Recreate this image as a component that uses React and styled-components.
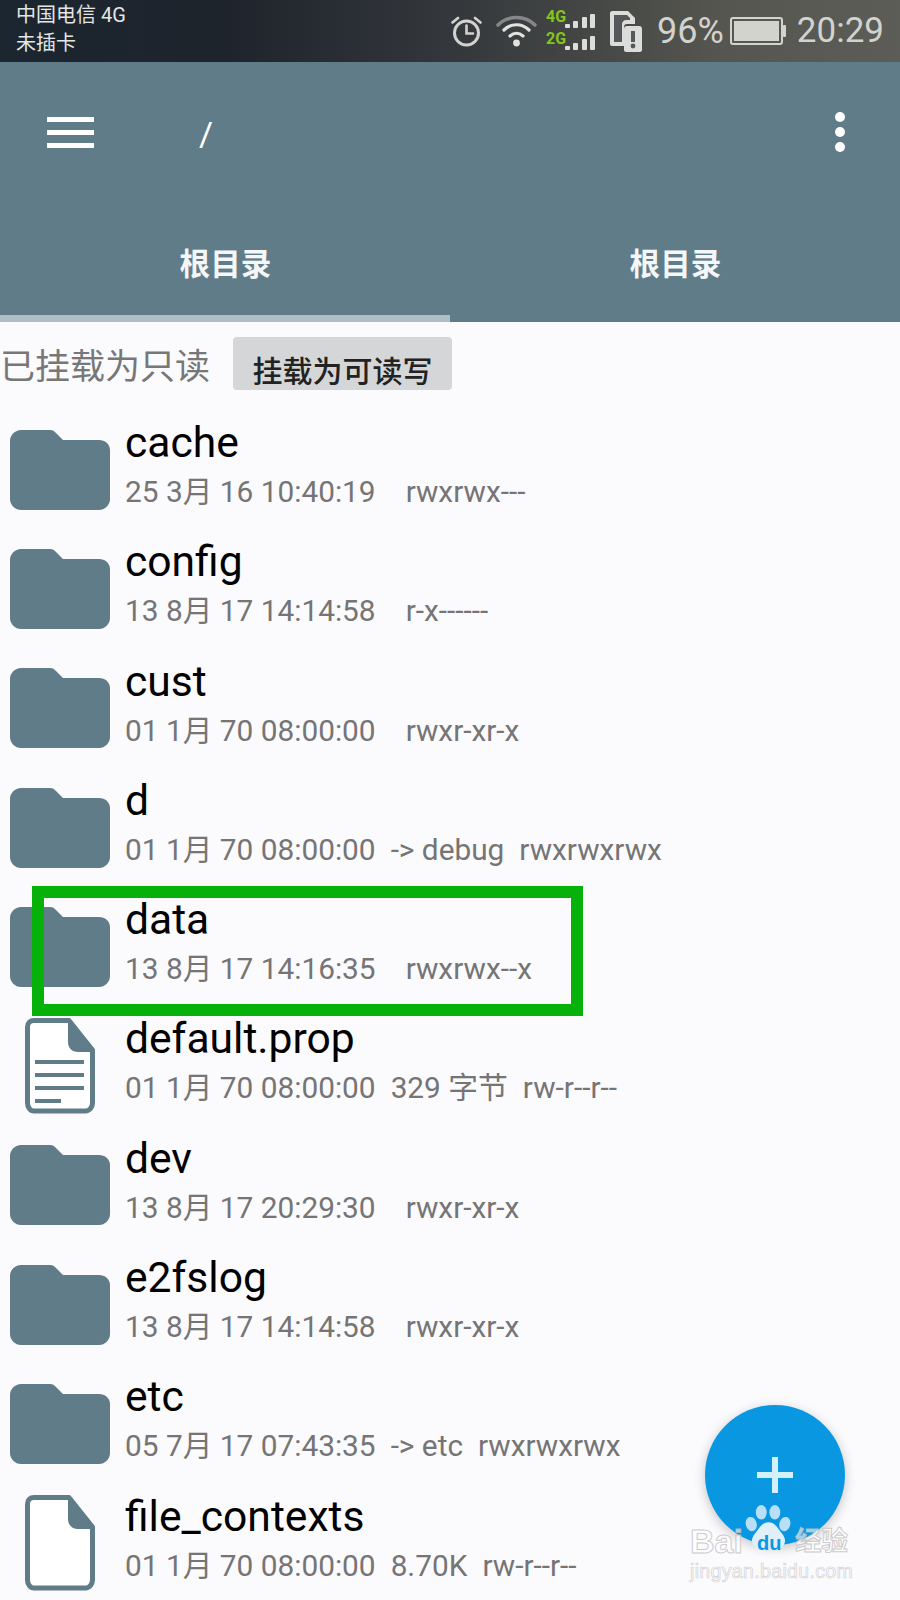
import React from 'react'
import styled, { createGlobalStyle } from 'styled-components'

const Global = createGlobalStyle`
  html, body { margin: 0; padding: 0; background: #fbfafd; }
  * { box-sizing: border-box; }
`
const Screen = styled.div`
  position: relative;
  width: 900px;
  height: 1600px;
  overflow: hidden;
  background: #fbfafd;
  font-family: Roboto, "Noto Sans CJK SC", sans-serif;
`
const StatusBar = styled.div`
  display: flex;
  justify-content: space-between;
  height: 62px;
  padding: 0 16px;
  background: linear-gradient(90deg, #1b2630 0%, #1e242c 25%, #34373b 50%, #55564f 80%, #5c5d57 100%);
`
const Carrier = styled.div`
  display: flex;
  flex-direction: column;
  gap: 6px;
  padding-top: 4px;
  font-size: 20px;
  line-height: 22px;
  color: #e4e6e6;
`
const StatusRight = styled.div`
  display: flex;
  align-items: center;
  gap: 6px;
  color: #d2d2ce;
`
const StatusText = styled.span`
  font-size: ${p => p.$size || 36}px;
  line-height: 62px;
  margin-left: ${p => p.$left || 0}px;
`
const IconSlot = styled.span`
  display: flex;
  margin-left: ${p => p.$left || 0}px;
`
const Net = styled.div`
  display: flex;
  flex-direction: column;
  width: 50px;
  margin: 0 8px 0 3px;
`
const NetRow = styled.div`
  display: flex;
  align-items: flex-start;
  height: 22px;
  svg {
    margin-top: 5px;
  }
`
const NetLabel = styled.span`
  font-size: 16px;
  line-height: 15px;
  font-weight: 700;
  color: #84c51c;
  width: 19px;
`
const Toolbar = styled.header`
  background: #607c89;
  height: 260px;
  display: flex;
  flex-direction: column;
`
const TopRow = styled.div`
  display: flex;
  align-items: center;
  height: 136px;
  padding: 0 55px 0 47px;
`
const MenuIcon = styled.div`
  display: flex;
  flex-direction: column;
  gap: 8px;
  width: 47px;
  margin-top: 4px;
  span {
    height: 5px;
    background: #fff;
  }
`
const PathText = styled.div`
  flex: 1;
  padding-left: 105px;
  padding-top: 8px;
  font-size: 34px;
  color: #fff;
`
const Dots = styled.div`
  display: flex;
  flex-direction: column;
  gap: 5px;
  margin-top: 4px;
  span {
    width: 10px;
    height: 10px;
    border-radius: 50%;
    background: #fff;
  }
`
const Tabs = styled.div`
  flex: 1;
  display: grid;
  grid-template-columns: 1fr 1fr;
`
const Tab = styled.div`
  display: flex;
  align-items: center;
  justify-content: center;
  padding: 10px 0 0 1px;
  font-size: 30.6px;
  font-weight: 700;
  color: #f4f6f7;
  border-bottom: 7px solid ${p => (p.$active ? '#b0bec5' : 'transparent')};
`
const MountBar = styled.div`
  display: flex;
  align-items: center;
  gap: 23px;
  height: 68px;
  padding: 15px 0 0;
`
const MountLabel = styled.span`
  font-size: 35px;
  color: #777;
`
const MountButton = styled.button`
  width: 219px;
  height: 53px;
  padding: 11px 0 0;
  border: 0;
  border-radius: 4px;
  background: #d4d6d8;
  font: 500 30px "Noto Sans CJK SC", sans-serif;
  color: #222;
  line-height: 40px;
`
const List = styled.div`
  display: flex;
  flex-direction: column;
  padding-top: 20px;
`
const Row = styled.div`
  display: flex;
  height: 119.3px;
`
const IconCell = styled.div`
  flex: none;
  width: 120px;
  display: flex;
  align-items: center;
  justify-content: center;
`
const RowBody = styled.div`
  margin-left: 5px;
  padding-top: 7px;
`
const Name = styled.div`
  font-size: 42.6px;
  line-height: 50px;
  color: #000;
`
const Meta = styled.div`
  display: flex;
  gap: 15px;
  margin-top: 2px;
  font-size: 29.8px;
  line-height: 46px;
  color: #757575;
`
const Highlight = styled.div`
  position: absolute;
  left: 32px;
  top: 886px;
  width: 551px;
  height: 130px;
  border: 12px solid #06b20a;
`
const Fab = styled.div`
  position: absolute;
  left: 705px;
  top: 1405px;
  width: 140px;
  height: 140px;
  border-radius: 50%;
  background: #0a97e2;
  box-shadow: 0 3px 12px rgba(0, 0, 0, .22);
  display: flex;
  align-items: center;
  justify-content: center;
`
const Watermark = styled.div`
  position: absolute;
  left: 690px;
  top: 1505px;
  width: 170px;
  color: rgba(255, 255, 255, .62);
  -webkit-text-stroke: 1px rgba(190, 190, 190, .8);
`
const MarkLine = styled.div`
  display: flex;
  align-items: flex-end;
  height: 49px;
`
const MarkWord = styled.span`
  flex: none;
  font: 700 ${p => p.$size || 34}px/26px "Liberation Sans", "Noto Sans CJK SC", sans-serif;
`
const Paw = styled.div`
  position: relative;
  flex: none;
  width: 47px;
  height: 49px;
  margin: 0 3px 0 2px;
  span {
    position: absolute;
    left: 12px;
    top: 28px;
    font: 700 20px/20px "Liberation Sans", sans-serif;
    color: #0a97e2;
    -webkit-text-stroke: 0;
  }
`
const MarkUrl = styled.div`
  margin-top: 6px;
  font: 400 19.5px/22px "Liberation Sans", sans-serif;
  letter-spacing: .35px;
  color: rgba(255, 255, 255, .5);
  -webkit-text-stroke: .7px rgba(195, 195, 195, .75);
`

const Folder = () => (
  <svg width="100" height="80" viewBox="0 0 100 80">
    <path d="M11 0h29c3 0 4 1 6 3l7 7h36c6 0 11 4 11 10v49c0 6-5 11-11 11H11C5 80 0 75 0 69V11C0 5 5 0 11 0z" fill="#607c89" />
  </svg>
)

const FileIcon = ({ lines }) => (
  <svg width="70" height="96" viewBox="0 0 70 96">
    <path d="M9 2.500h35L67.500 32v53c0 4-3 8-7 8H9c-4 0-6.500-4-6.500-8V9c0-4 2.500-6.500 6.500-6.500z" fill="#fff" stroke="#607c89" strokeWidth="5" strokeLinejoin="round" />
    <path d="M43 2v22c0 6 4 10 10 10h15z" fill="#607c89" />
    {lines && (
      <g fill="#607c89">
        <rect x="10" y="42" width="49" height="4" />
        <rect x="10" y="55" width="49" height="4" />
        <rect x="10" y="68" width="49" height="4" />
        <rect x="10" y="81" width="26" height="4" />
      </g>
    )}
  </svg>
)

const Alarm = () => (
  <svg width="31" height="32" viewBox="0 0 31 32" fill="none" stroke="#d2d2ce" strokeLinecap="round">
    <circle cx="15.500" cy="18" r="12" strokeWidth="3" />
    <path d="M15.500 10.500V18.500H22" strokeWidth="2.600" />
    <path d="M1.500 7.500 7 3M29.500 7.500 24 3" strokeWidth="2.600" />
  </svg>
)

const Wifi = () => (
  <svg width="41" height="32" viewBox="0 0 41 32" fill="none" strokeLinecap="round">
    <path d="M2 10C12 0 29 0 39 10" stroke="#85878a" strokeWidth="3.500" />
    <path d="M8 15c7-7 18-7 25 0" stroke="#e2e2e0" strokeWidth="3.200" />
    <path d="M14 21c4-3.500 9-3.500 13 0" stroke="#e2e2e0" strokeWidth="3.200" />
    <circle cx="20.500" cy="28" r="3.400" fill="#e2e2e0" />
  </svg>
)

const Bars = () => (
  <svg width="30" height="14" viewBox="0 0 30 14" fill="#dcdcda">
    <rect x="0" y="10" width="5" height="4" rx="1" />
    <rect x="8" y="7" width="5" height="7" rx="1" />
    <rect x="17" y="3" width="5" height="11" rx="1" />
    <rect x="25" y="0" width="5" height="14" rx="1" />
  </svg>
)

const Sim = () => (
  <svg width="32" height="41" viewBox="0 0 32 41">
    <path d="M2 0h16l7 7v6h-8c-2 0-3 1-3 3v19H2c-1 0-2-1-2-2V2C0 1 1 0 2 0z" fill="#dcdcda" />
    <path d="M4 4v27h8V13c0-2 2-4 4-4h4V7l-3-3z" fill="#54585a" />
    <path d="M14 18c0-2 1-3 3-3h12c2 0 3 1 3 3v21c0 1-1 2-2 2H16c-1 0-2-1-2-2z" fill="#dcdcda" />
    <rect x="21" y="20" width="4" height="11" fill="#54585a" />
    <circle cx="23" cy="35" r="2.400" fill="#54585a" />
  </svg>
)

const Battery = () => (
  <svg width="56" height="28" viewBox="0 0 56 28">
    <rect x="1" y="1" width="51" height="26" rx="2" fill="none" stroke="#d2d2ce" strokeWidth="2" />
    <rect x="4" y="4" width="45" height="20" fill="#d2d2ce" />
    <rect x="53" y="8" width="3" height="12" rx="1" fill="#d2d2ce" />
  </svg>
)

const PawPrint = () => (
  <svg width="47" height="49" viewBox="0 0 50 54" fill="#b9dff6">
    <ellipse cx="6" cy="21" rx="6" ry="8" transform="rotate(-15 6 21)" />
    <ellipse cx="17" cy="8" rx="6" ry="8" />
    <ellipse cx="32" cy="8" rx="6" ry="8" />
    <ellipse cx="43" cy="21" rx="6" ry="8" transform="rotate(15 43 21)" />
    <path d="M25 19c8 0 11 8 16 14 5 7 1 15-7 15H16c-8 0-12-8-7-15 5-6 8-14 16-14z" fill="#dff0fb" />
  </svg>
)

const files = [
  { name: 'cache', date: '25 3月 16 10:40:19', size: '', perm: 'rwxrwx---' },
  { name: 'config', date: '13 8月 17 14:14:58', size: '', perm: 'r-x------' },
  { name: 'cust', date: '01 1月 70 08:00:00', size: '', perm: 'rwxr-xr-x' },
  { name: 'd', date: '01 1月 70 08:00:00', size: '-> debug', perm: 'rwxrwxrwx' },
  { name: 'data', date: '13 8月 17 14:16:35', size: '', perm: 'rwxrwx--x' },
  { name: 'default.prop', date: '01 1月 70 08:00:00', size: '329 字节', perm: 'rw-r--r--', icon: 'text' },
  { name: 'dev', date: '13 8月 17 20:29:30', size: '', perm: 'rwxr-xr-x' },
  { name: 'e2fslog', date: '13 8月 17 14:14:58', size: '', perm: 'rwxr-xr-x' },
  { name: 'etc', date: '05 7月 17 07:43:35', size: '-> etc', perm: 'rwxrwxrwx' },
  { name: 'file_contexts', date: '01 1月 70 08:00:00', size: '8.70K', perm: 'rw-r--r--', icon: 'file' },
]

const App = () => (
  <Screen>
    <Global />
    <StatusBar>
      <Carrier>
        <span>中国电信 4G</span>
        <span>未插卡</span>
      </Carrier>
      <StatusRight>
        <Alarm />
        <IconSlot $left={8}><Wifi /></IconSlot>
        <Net>
          <NetRow><NetLabel>4G</NetLabel><Bars /></NetRow>
          <NetRow><NetLabel>2G</NetLabel><Bars /></NetRow>
        </Net>
        <Sim />
        <StatusText $left={9}>96%</StatusText>
        <Battery />
        <StatusText $left={5} $size={35}>20:29</StatusText>
      </StatusRight>
    </StatusBar>
    <Toolbar>
      <TopRow>
        <MenuIcon><span /><span /><span /></MenuIcon>
        <PathText>/</PathText>
        <Dots><span /><span /><span /></Dots>
      </TopRow>
      <Tabs>
        <Tab $active>根目录</Tab>
        <Tab>根目录</Tab>
      </Tabs>
    </Toolbar>
    <MountBar>
      <MountLabel>已挂载为只读</MountLabel>
      <MountButton>挂载为可读写</MountButton>
    </MountBar>
    <List>
      {files.map(f => (
        <Row key={f.name}>
          <IconCell>
            {f.icon ? <FileIcon lines={f.icon === 'text'} /> : <Folder />}
          </IconCell>
          <RowBody>
            <Name>{f.name}</Name>
            <Meta>
              <span>{f.date}</span>
              <span>{f.size}</span>
              <span>{f.perm}</span>
            </Meta>
          </RowBody>
        </Row>
      ))}
    </List>
    <Highlight />
    <Fab>
      <svg width="36" height="36" viewBox="0 0 36 36">
        <path d="M15 0h6v15h15v6H21v15h-6V21H0v-6h15z" fill="#d2f1fd" />
      </svg>
    </Fab>
    <Watermark>
      <MarkLine>
        <MarkWord>Bai</MarkWord>
        <Paw>
          <PawPrint />
          <span>du</span>
        </Paw>
        <MarkWord $size={26.5}>经验</MarkWord>
      </MarkLine>
      <MarkUrl>jingyan.baidu.com</MarkUrl>
    </Watermark>
  </Screen>
)

export default App
